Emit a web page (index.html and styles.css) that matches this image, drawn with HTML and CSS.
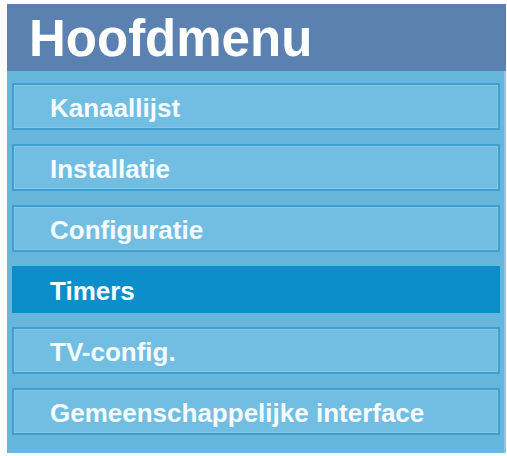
FILE: index.html
```html
<!DOCTYPE html>
<html lang="nl">
<head>
<meta charset="utf-8">
<title>Hoofdmenu</title>
<link rel="stylesheet" href="styles.css">
</head>
<body>
<div class="panel">
  <div class="header">Hoofdmenu</div>
  <ul class="menu">
    <li class="item">Kanaallijst</li>
    <li class="item">Installatie</li>
    <li class="item">Configuratie</li>
    <li class="item selected">Timers</li>
    <li class="item">TV-config.</li>
    <li class="item">Gemeenschappelijke interface</li>
  </ul>
</div>
</body>
</html>
```
FILE: styles.css
```css
html, body {
  margin: 0;
  padding: 0;
  background: #ffffff;
}
body {
  padding: 4px 1px 0 7px;
  font-family: "Liberation Sans", Arial, sans-serif;
}
.panel {
  width: 499px;
  height: 449px;
  background: #67b7dd;
  display: flex;
  flex-direction: column;
  box-sizing: border-box;
  border-right: 2px solid #8ccbe8;
}
.header {
  height: 67px;
  flex: none;
  background: #5b81b1;
  color: #ffffff;
  font-weight: bold;
  font-size: 51px;
  line-height: 70px;
  padding-left: 22px;
  margin-right: -2px;
}
.menu {
  list-style: none;
  margin: 0;
  padding: 12px 4px 0 5px;
  display: flex;
  flex-direction: column;
  gap: 14px;
}
.item {
  height: 47px;
  box-sizing: border-box;
  background: #72bee2;
  border: 2px solid #3e9fd0;
  box-shadow: inset 0 0 0 1px #84c8e8;
  color: #f4fbff;
  font-weight: bold;
  font-size: 26px;
  line-height: 46px;
  padding-left: 36px;
}
.item.selected {
  background: #0b8ec9;
  border-color: #0b8ec9;
  box-shadow: none;
  color: #ffffff;
}
```
